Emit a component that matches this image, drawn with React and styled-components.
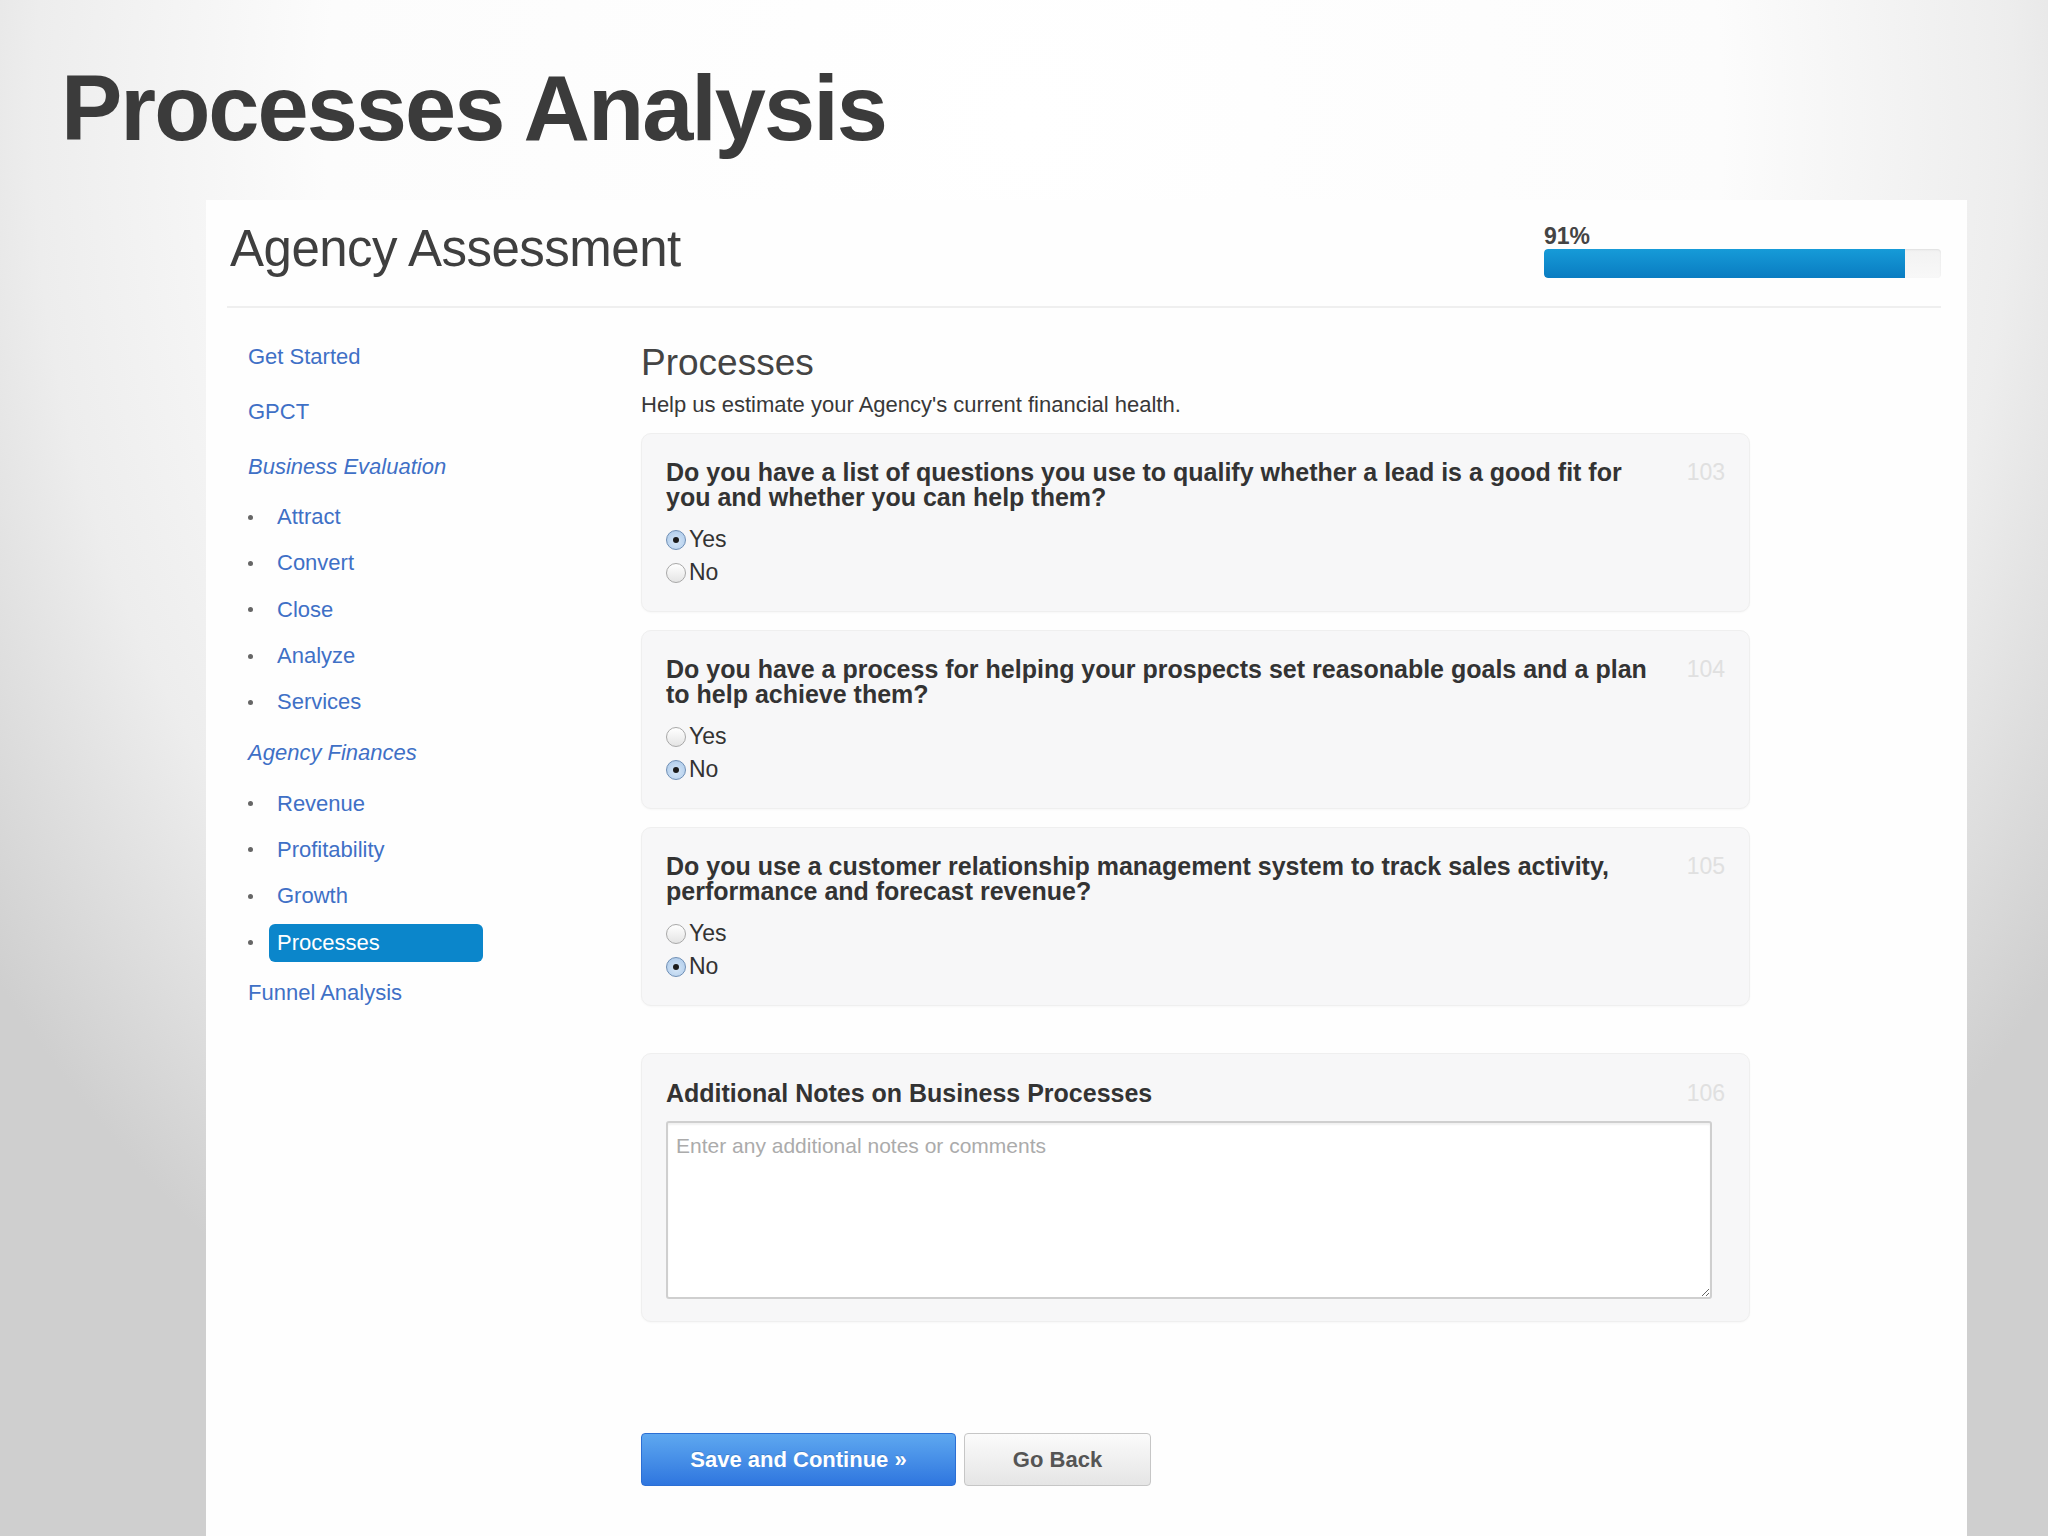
import styled, { createGlobalStyle } from 'styled-components';

const GlobalStyle = createGlobalStyle`
  html, body {
    margin: 0;
    padding: 0;
  }
  body {
    font-family: "Liberation Sans", Arial, sans-serif;
    background: #f4f4f4;
  }
  * {
    box-sizing: border-box;
  }
`;

const sections = [
  { label: 'Get Started' },
  { label: 'GPCT' },
  {
    label: 'Business Evaluation',
    group: true,
    items: ['Attract', 'Convert', 'Close', 'Analyze', 'Services'],
  },
  {
    label: 'Agency Finances',
    group: true,
    items: ['Revenue', 'Profitability', 'Growth', 'Processes'],
  },
  { label: 'Funnel Analysis' },
];

const questions = [
  {
    id: 103,
    lines: ['Do you have a list of questions you use to qualify whether a lead is a good fit for', 'you and whether you can help them?'],
    answer: 'Yes',
  },
  {
    id: 104,
    lines: ['Do you have a process for helping your prospects set reasonable goals and a plan', 'to help achieve them?'],
    answer: 'No',
  },
  {
    id: 105,
    lines: ['Do you use a customer relationship management system to track sales activity,', 'performance and forecast revenue?'],
    answer: 'No',
  },
];

const progress = 91;

export default function App() {
  return (
    <Page>
      <GlobalStyle />
      <SlideTitle>Processes Analysis</SlideTitle>

      <Panel>
        <Header>
          <AppTitle>Agency Assessment</AppTitle>
          <Progress>
            <ProgressLabel>{progress}%</ProgressLabel>
            <Track>
              <Fill style={{ width: `${progress}%` }} />
            </Track>
          </Progress>
        </Header>

        <Body>
          <Sidebar>
            {sections.map((section) => (
              <li key={section.label}>
                <TopLink group={section.group}>{section.label}</TopLink>
                {section.items && (
                  <SubList>
                    {section.items.map((item) => (
                      <SubItem key={item}>
                        <Bullet />
                        <SubLink active={item === 'Processes'}>{item}</SubLink>
                      </SubItem>
                    ))}
                  </SubList>
                )}
              </li>
            ))}
          </Sidebar>

          <Main>
            <SectionTitle>Processes</SectionTitle>
            <SectionIntro>Help us estimate your Agency&apos;s current financial health.</SectionIntro>

            {questions.map((q) => (
              <QuestionCard key={q.id}>
                <QuestionRow>
                  <QuestionText>
                    {q.lines[0]}
                    <br />
                    {q.lines[1]}
                  </QuestionText>
                  <QuestionNumber>{q.id}</QuestionNumber>
                </QuestionRow>
                <Options>
                  {['Yes', 'No'].map((opt) => (
                    <Option key={opt}>
                      <Radio checked={q.answer === opt} />
                      {opt}
                    </Option>
                  ))}
                </Options>
              </QuestionCard>
            ))}

            <NotesCard>
              <QuestionRow>
                <QuestionText>Additional Notes on Business Processes</QuestionText>
                <QuestionNumber>106</QuestionNumber>
              </QuestionRow>
              <Notes placeholder="Enter any additional notes or comments" />
            </NotesCard>

            <Actions>
              <PrimaryButton>Save and Continue »</PrimaryButton>
              <SecondaryButton>Go Back</SecondaryButton>
            </Actions>
          </Main>
        </Body>
      </Panel>
    </Page>
  );
}

const Page = styled.div`
    width: 2048px;
    height: 1536px;
    overflow: hidden;
    padding-top: 56px;
    background:
      radial-gradient(ellipse 62% 95% at 50% 8%, #ffffff 0%, #fcfcfc 55%, #ededed 78%, #cfcfcf 100%);
`;

const SlideTitle = styled.h1`
    margin: 0 0 0 61px;
    font-size: 92px;
    line-height: 104px;
    font-weight: bold;
    letter-spacing: -2px;
    color: #3b3b3b;
`;

const Panel = styled.div`
    margin: 40px 0 0 206px;
    width: 1761px;
    height: 1336px;
    background: #fefefe;
    padding: 0 26px 0 21px;
`;

const Header = styled.div`
    height: 108px;
    display: flex;
    justify-content: space-between;
    align-items: flex-start;
    padding: 20px 0 0 3px;
    border-bottom: 2px solid #efefef;
`;

const AppTitle = styled.h2`
    margin: 0;
    font-size: 51px;
    line-height: 58px;
    font-weight: normal;
    letter-spacing: -0.5px;
    color: #3f3f3f;
`;

const Progress = styled.div`
    width: 397px;
    padding-top: 4px;
`;

const ProgressLabel = styled.div`
    font-size: 23px;
    line-height: 24px;
    font-weight: bold;
    color: #444;
`;

const Track = styled.div`
    margin-top: 1px;
    height: 29px;
    border-radius: 4px;
    background: linear-gradient(#f2f2f2, #f8f8f8);
    box-shadow: inset 0 1px 2px rgba(0, 0, 0, 0.08);
    overflow: hidden;
`;

const Fill = styled.div`
    height: 100%;
    border-radius: 4px 0 0 4px;
    background: linear-gradient(#169bd8, #0a7cc1);
`;

const Body = styled.div`
    display: grid;
    grid-template-columns: 414px 1109px;
`;

const Sidebar = styled.ul`
    list-style: none;
    margin: 0;
    padding: 21px 0 0 21px;
`;

const TopLink = styled.a`
    display: flex;
    align-items: center;
    height: 55px;
    font-size: 22px;
    font-style: ${(props) => (props.group ? 'italic' : 'normal')};
    color: #3f70c6;
`;

const SubList = styled.ul`
    list-style: none;
    margin: 0;
    padding: 0;
`;

const SubItem = styled.li`
    display: flex;
    align-items: center;
    height: 46.3px;
`;

const Bullet = styled.span`
    width: 5px;
    height: 5px;
    border-radius: 50%;
    background: #666;
    margin-right: 16px;
`;

const SubLink = styled.a`
    display: flex;
    align-items: center;
    height: 38px;
    width: 214px;
    padding-left: 8px;
    border-radius: 6px;
    font-size: 22px;
    color: ${(props) => (props.active ? '#fff' : '#3f70c6')};
    background: ${(props) => (props.active ? '#0b86cb' : 'transparent')};
`;

const Main = styled.div`
    padding-top: 33px;
`;

const SectionTitle = styled.h3`
    margin: 0;
    font-size: 37px;
    line-height: 44px;
    font-weight: normal;
    color: #444;
`;

const SectionIntro = styled.p`
    margin: 7px 0 15px;
    font-size: 22px;
    line-height: 26px;
    color: #383838;
`;

const QuestionCard = styled.div`
    background: #f7f7f8;
    border: 1px solid #efefef;
    border-radius: 10px;
    padding: 26px 24px 22px 24px;
    margin-bottom: 18px;
    box-shadow: 0 1px 2px rgba(0, 0, 0, 0.03);
`;

const NotesCard = styled(QuestionCard)`
    margin-top: 47px;
    padding: 27px 24px 22px 24px;
`;

const QuestionRow = styled.div`
    display: flex;
    justify-content: space-between;
    align-items: flex-start;
`;

const QuestionText = styled.div`
    font-size: 25px;
    line-height: 25px;
    font-weight: bold;
    color: #333;
`;

const QuestionNumber = styled.span`
    font-size: 23px;
    line-height: 25px;
    color: #e0e0e0;
`;

const Options = styled.div`
    margin-top: 13px;
`;

const Option = styled.label`
    display: flex;
    align-items: center;
    height: 33px;
    font-size: 23px;
    color: #333;
`;

const Radio = styled.span`
    position: relative;
    width: 20px;
    height: 20px;
    margin: 0 3px 0 0;
    border-radius: 50%;
    border: 1px solid ${(props) => (props.checked ? '#6f8fb5' : '#a8a8a8')};
    background: ${(props) => (props.checked
    ? 'radial-gradient(circle at 50% 60%, #d6e7f8, #a9c7e8)'
    : 'linear-gradient(#ffffff, #e4e4e4)')};

    &::after {
      content: '';
      display: ${(props) => (props.checked ? 'block' : 'none')};
      position: absolute;
      left: 50%;
      top: 50%;
      width: 6px;
      height: 6px;
      margin: -3px 0 0 -3px;
      border-radius: 50%;
      background: #1c1c1c;
    }
`;

const Notes = styled.textarea`
    display: block;
    margin-top: 15px;
    width: 1046px;
    height: 178px;
    padding: 11px 8px;
    border: 2px solid #cfcfcf;
    border-radius: 3px;
    background: #fff;
    box-shadow: inset 0 2px 2px rgba(0, 0, 0, 0.06);
    font-family: "Liberation Sans", Arial, sans-serif;
    font-size: 21px;
    color: #333;

    &::placeholder {
      color: #ababab;
    }
`;

const Actions = styled.div`
    display: flex;
    gap: 8px;
    margin-top: 111px;
`;

const PrimaryButton = styled.button`
    width: 315px;
    height: 53px;
    border: 1px solid #2c6fd4;
    border-radius: 4px;
    background: linear-gradient(#5ea8f0, #2f76df);
    color: #fff;
    font-family: "Liberation Sans", Arial, sans-serif;
    font-size: 22px;
    font-weight: bold;
    text-shadow: 0 -1px 0 rgba(0, 0, 0, 0.15);
`;

const SecondaryButton = styled.button`
    width: 187px;
    height: 53px;
    border: 1px solid #c6c6c6;
    border-radius: 4px;
    background: linear-gradient(#fbfbfb, #e5e5e5);
    color: #555;
    font-family: "Liberation Sans", Arial, sans-serif;
    font-size: 22px;
    font-weight: bold;
`;
